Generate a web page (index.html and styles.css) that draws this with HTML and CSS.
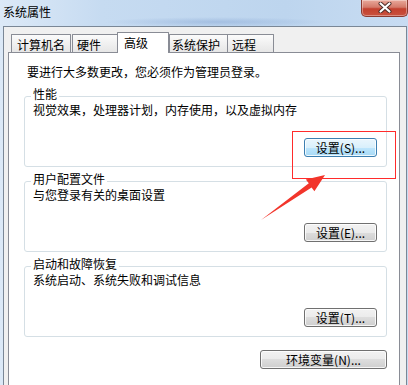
FILE: index.html
```html
<!DOCTYPE html>
<html lang="zh-CN">
<head>
<meta charset="utf-8">
<title>系统属性</title>
<link rel="stylesheet" href="styles.css">
</head>
<body>
<div class="window">
  <div class="titlebar">
    <span class="title">系统属性</span>
    <div class="close">
      <svg width="14" height="11" viewBox="0 0 14 11">
        <path d="M2.5 1.5 L11.5 9.5 M11.5 1.5 L2.5 9.5" stroke="#4a2a26" stroke-width="4" stroke-linecap="round"/>
        <path d="M2.5 1.5 L11.5 9.5 M11.5 1.5 L2.5 9.5" stroke="#ffffff" stroke-width="2.2" stroke-linecap="round"/>
      </svg>
    </div>
  </div>
  <div class="client">
    <div class="tabs">
      <div class="tab tab-computer">计算机名</div>
      <div class="tab tab-hardware">硬件</div>
      <div class="tab tab-selected">高级</div>
      <div class="tab tab-protect">系统保护</div>
      <div class="tab tab-remote">远程</div>
    </div>
    <div class="panel">
      <p class="intro">要进行大多数更改，您必须作为管理员登录。</p>
      <div class="group">
        <div class="legend">性能</div>
        <p class="desc">视觉效果，处理器计划，内存使用，以及虚拟内存</p>
        <div class="actions"><button class="btn btn-focus">设置(S)...</button></div>
      </div>
      <div class="group">
        <div class="legend">用户配置文件</div>
        <p class="desc">与您登录有关的桌面设置</p>
        <div class="actions"><button class="btn">设置(E)...</button></div>
      </div>
      <div class="group">
        <div class="legend">启动和故障恢复</div>
        <p class="desc">系统启动、系统失败和调试信息</p>
        <div class="actions"><button class="btn">设置(T)...</button></div>
      </div>
      <div class="env-row"><button class="btn btn-env">环境变量(N)...</button></div>
    </div>
  </div>
  <div class="mark-box"></div>
  <svg class="mark-arrow" width="408" height="385" viewBox="0 0 408 385">
    <polygon points="261,220 308.8,183.3 305.8,179.5 325,175 314.4,191.3 311.6,187.5" fill="#f2352b"/>
  </svg>
</div>
</body>
</html>
```
FILE: styles.css
```css
* { box-sizing: border-box; }
html, body { margin: 0; padding: 0; }
body {
  width: 408px;
  height: 385px;
  overflow: hidden;
  font-family: "Noto Sans CJK SC", "Noto Sans", sans-serif;
  font-size: 12px;
  color: #000;
}
.window {
  position: relative;
  width: 408px;
  height: 385px;
  background:
    radial-gradient(ellipse 110px 5px at 215px 22px, rgba(110,145,200,0.35), rgba(110,145,200,0) 100%),
    linear-gradient(to right, #dce9f7 0%, #c6dbf1 25%, #bdd5ee 70%, #c8dcf2 100%);
  display: flex;
  flex-direction: column;
}
.titlebar {
  height: 26px;
  flex: none;
  display: flex;
  align-items: flex-start;
  justify-content: space-between;
}
.title {
  padding: 4px 0 0 3px;
  line-height: 16px;
  color: #000;
}
.close {
  width: 47px;
  height: 17px;
  margin-right: 0;
  border: 1px solid #8b3a30;
  border-top: none;
  border-radius: 0 0 5px 5px;
  background: linear-gradient(#e9a99b 0%, #d47a6a 45%, #c3402e 55%, #c9523f 100%);
  box-shadow: inset 0 0 0 1px rgba(255,255,255,0.35);
  display: flex;
  align-items: center;
  justify-content: center;
}
.close svg { display: block; margin-top: -1px; }
.client {
  flex: 1;
  margin: 0 1px 0 3px;
  border: 1px solid #7a8796;
  border-bottom: none;
  background: #f0f0f0;
  padding-top: 5px;
  overflow: hidden;
}
.tabs {
  position: relative;
  z-index: 1;
  height: 20px;
  display: flex;
  align-items: flex-end;
  padding-left: 7px;
}
.tab {
  height: 18px;
  border: 1px solid #898c95;
  border-bottom: none;
  background: linear-gradient(#fbfbfb, #e6e6e6);
  line-height: 16px;
  padding: 2px 0 0 5px;
  white-space: nowrap;
  border-radius: 1px 1px 0 0;
}
.tab-computer { width: 60px; }
.tab-hardware { width: 46px; margin-left: 1px; padding-left: 4px; }
.tab-selected {
  width: 52px;
  height: 21px;
  margin-left: -1px;
  margin-bottom: -1px;
  background: #ffffff;
  padding-left: 6px;
  padding-top: 2px;
}
.tab-protect { width: 59px; padding-left: 2px; }
.tab-remote { width: 47px; margin-left: -1px; padding-left: 4px; }
.panel {
  margin: 0 6px 0 4px;
  height: 340px;
  border: 1px solid #898c95;
  background: #ffffff;
  padding: 11px 12px 0 15px;
}
.intro {
  margin: 0 0 0 3px;
  line-height: 16px;
}
.group {
  margin-top: 16px;
  height: 71px;
  border: 1px solid #d5dfe5;
  border-radius: 3px;
  padding: 0 9px 0 8px;
}
.group + .group { margin-top: 14px; }
.legend {
  width: fit-content;
  margin: -10px 0 0 -2px;
  padding: 0 2px;
  background: #ffffff;
  line-height: 14px;
}
.desc {
  margin: 1px 0 0;
  line-height: 16px;
}
.actions {
  display: flex;
  justify-content: flex-end;
  margin-top: 20px;
}
.btn {
  height: 19px;
  width: 73px;
  padding: 0;
  border: 1px solid #707070;
  border-radius: 3px;
  background: linear-gradient(#f2f2f2 0%, #ebebeb 50%, #dddddd 50%, #cfcfcf 100%);
  box-shadow: inset 0 0 0 1px rgba(255,255,255,0.8);
  font-family: "Noto Sans CJK SC", "Noto Sans", sans-serif;
  font-size: 12px;
  line-height: 16px;
  color: #000;
}
.btn-focus {
  border-color: #3c7fb1;
  background: linear-gradient(#eaf6fd 0%, #d9f0fc 50%, #bee6fd 50%, #a7d9f5 100%);
}
.env-row {
  display: flex;
  justify-content: flex-end;
  margin-top: 13px;
}
.btn-env { width: 127px; }
.mark-box {
  position: absolute;
  left: 292px;
  top: 131px;
  width: 104px;
  height: 48px;
  border: 1px solid #ff2b2b;
}
.mark-arrow {
  position: absolute;
  left: 0;
  top: 0;
  pointer-events: none;
}
```
